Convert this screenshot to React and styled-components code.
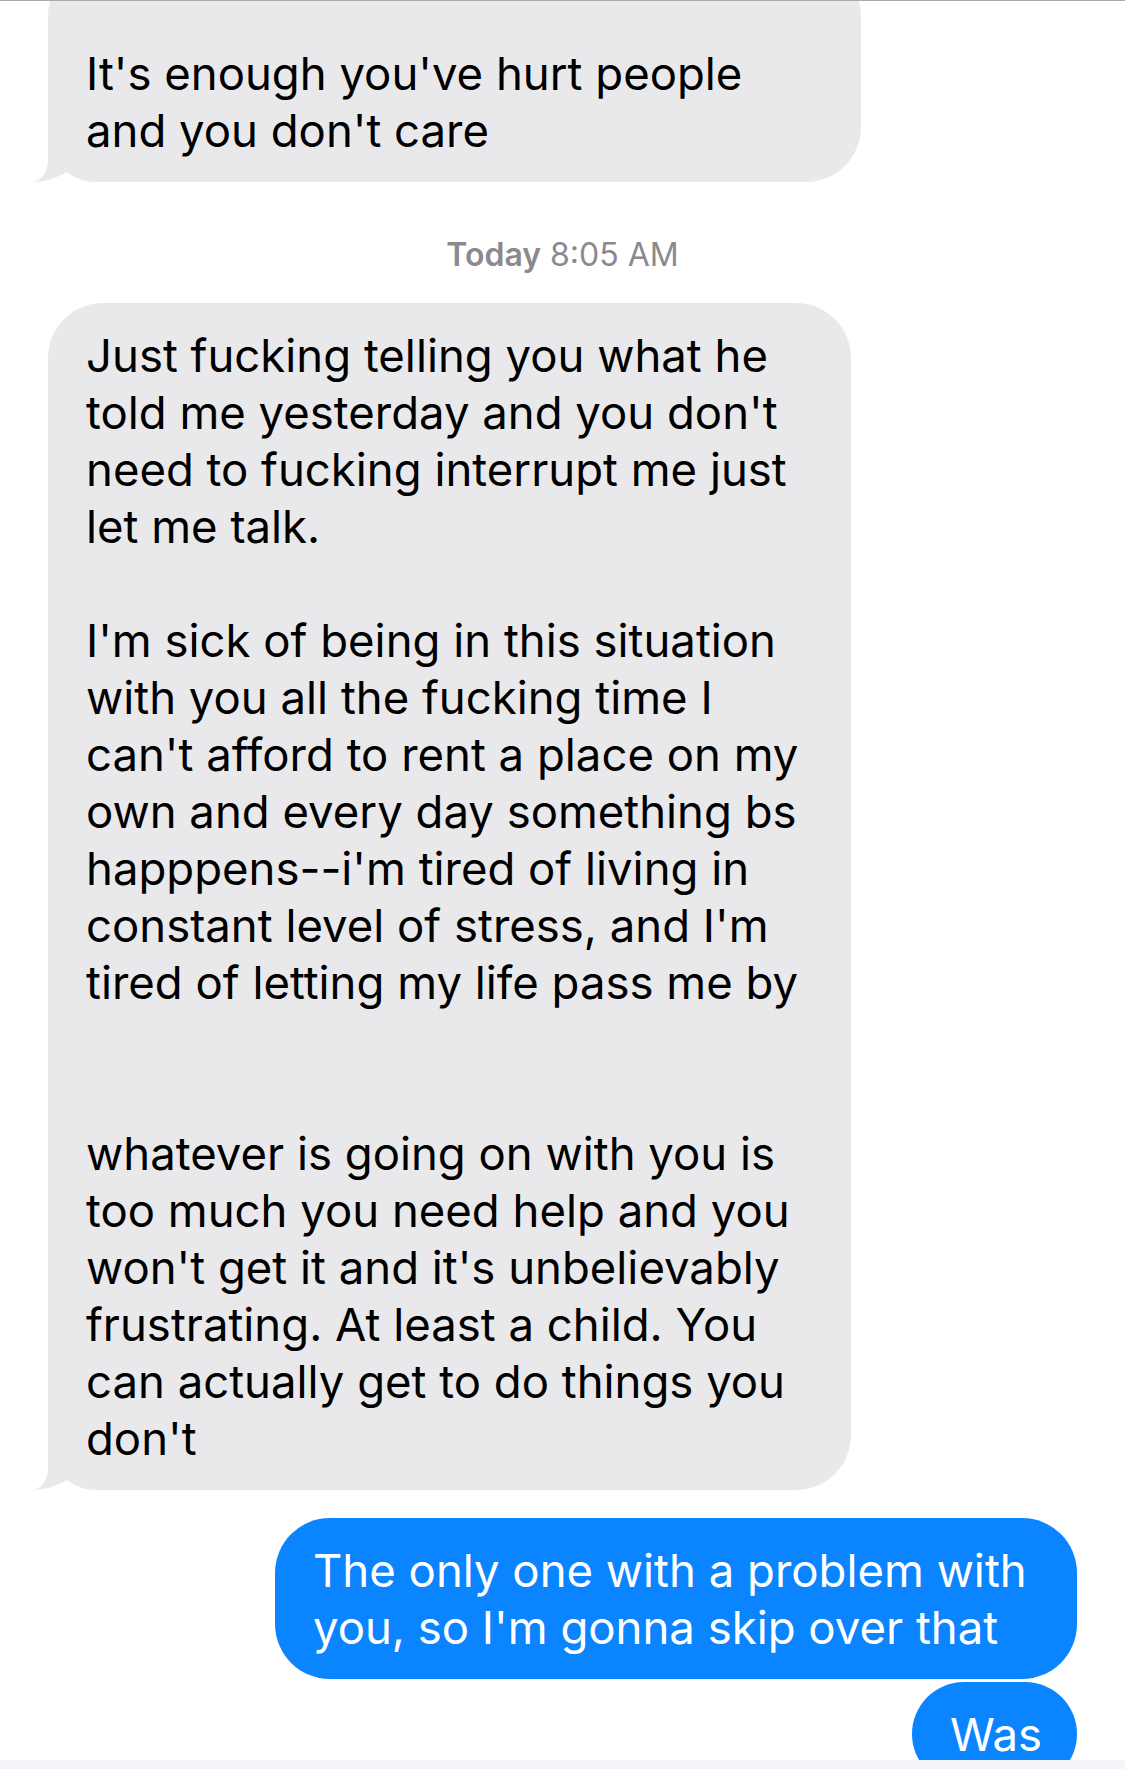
import React from 'react';
import styled, { createGlobalStyle } from 'styled-components';

const GlobalStyle = createGlobalStyle`
  html, body {
    margin: 0;
    padding: 0;
    background: #ffffff;
  }
  body {
    font-family: Inter, "Noto Sans", sans-serif;
    -webkit-font-smoothing: antialiased;
  }
`;

const theirs = '#e9e9eb';
const mine = '#0a84ff';

const Screen = styled.div`
  position: relative;
  box-sizing: border-box;
  width: 1125px;
  height: 1769px;
  overflow: hidden;
  background: #ffffff;
  border-top: 1px solid #a9a9a9;
`;

const Thread = styled.div`
  display: flex;
  flex-direction: column;
  padding: 0 48px;
`;

const Bubble = styled.div`
  position: relative;
  box-sizing: border-box;
  width: ${p => p.$width}px;
  align-self: ${p => (p.$mine ? 'flex-end' : 'flex-start')};
  margin-top: ${p => p.$gap || 0}px;
  padding: 24px 38px 23px;
  border-radius: 55px;
  background: ${p => (p.$mine ? mine : theirs)};
  color: ${p => (p.$mine ? '#ffffff' : '#000000')};
  font-size: 45.5px;
  line-height: 57px;
  white-space: pre;
`;

// first bubble runs off the top of the screen
const CutBubble = styled(Bubble)`
  margin-top: -40px;
  padding-top: 84px;
`;

const Text = styled.span`
  position: relative;
  z-index: 1;
`;

const Tail = styled.svg`
  position: absolute;
  z-index: 0;
  left: -16px;
  bottom: 0;
  width: 72px;
  height: 56px;
  fill: ${p => p.$color};
`;

const Stamp = styled.div`
  margin: 53px 0 28px;
  text-align: center;
  font-size: 32px;
  line-height: 40px;
  color: #8a8a8e;

  b {
    font-weight: 600;
  }
`;

const Composer = styled.div`
  position: absolute;
  left: 0;
  right: 0;
  bottom: 0;
  height: 9px;
  background: #f3f5f9;
`;

function BubbleTail({ color }) {
  return (
    <Tail viewBox="0 0 72 56" $color={color}>
      <path d="M0 56 C8 55 14 49 16 37 L16 0 L72 0 L72 56 L65 56 C52 56 42 52 35 46 C25 52 12 56 0 56 Z" />
    </Tail>
  );
}

const rant = `Just fucking telling you what he
told me yesterday and you don't
need to fucking interrupt me just
let me talk.

I'm sick of being in this situation
with you all the fucking time I
can't afford to rent a place on my
own and every day something bs
happpens--i'm tired of living in
constant level of stress, and I'm
tired of letting my life pass me by


whatever is going on with you is
too much you need help and you
won't get it and it's unbelievably
frustrating. At least a child. You
can actually get to do things you
don't`;

export default function App() {
  return (
    <Screen>
      <GlobalStyle />
      <Thread>
        <CutBubble $width={813}>
          <BubbleTail color={theirs} />
          <Text>{`It's enough you've hurt people\nand you don't care`}</Text>
        </CutBubble>

        <Stamp>
          <b>Today</b> 8:05 AM
        </Stamp>

        <Bubble $width={803}>
          <BubbleTail color={theirs} />
          <Text>{rant}</Text>
        </Bubble>

        <Bubble $mine $width={802} $gap={28}>
          <Text>{`The only one with a problem with\nyou, so I'm gonna skip over that`}</Text>
        </Bubble>
        <Bubble $mine $width={165} $gap={3}>
          <Text>Was</Text>
        </Bubble>
      </Thread>
      <Composer />
    </Screen>
  );
}
